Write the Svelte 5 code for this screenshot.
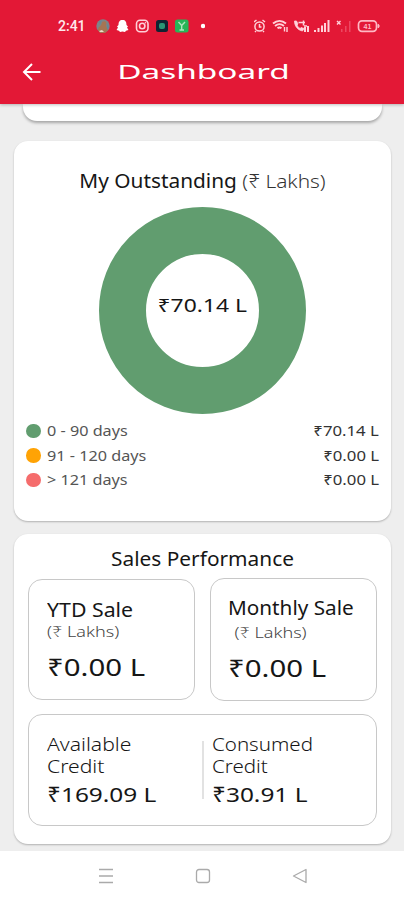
<script>
  const outstanding = [
    { label: '0 - 90 days', value: '₹70.14 L', tone: 'green' },
    { label: '91 - 120 days', value: '₹0.00 L', tone: 'orange' },
    { label: '> 121 days', value: '₹0.00 L', tone: 'coral' }
  ];

  const credits = [
    { label: 'Available', value: '₹169.09 L', kind: 'available' },
    { label: 'Consumed', value: '₹30.91 L', kind: 'consumed' }
  ];
</script>

<div class="screen">
  <header class="header">
    <div class="status-bar">
      <span class="clock">2:41</span>
      <svg class="notifications" width="110" height="16" viewBox="0 0 110 16" aria-hidden="true">
        <circle cx="8" cy="8" r="6.7" fill="#7d8588" />
        <path d="M3 12c0-4 3-2 4-8 4-2 5 1 4 4l2 4-3 3H5z" fill="#a67553" />
        <path d="M4 3l3-1-2 5zM12 5l2 4-2 3z" fill="#648898" />
        <path d="M4 13l3-1 2 2H5z" fill="#e8ddc8" />
        <path d="M27.500 2c-3 0-4 2-4 5l-1.500 1.500 1 1-1.500 2.500 2.500.8 1 1.200 2.500-.5 2.500.5 1-1.200 2.500-.8-1.500-2.500 1-1L31.500 7c0-3-1-5-4-5z" fill="#fff" />
        <g fill="none" stroke="#ffcfd7" stroke-width="1.600">
          <rect x="41.500" y="2.200" width="11.500" height="11.500" rx="3.500" />
          <circle cx="47.200" cy="8" r="2.700" />
        </g>
        <circle cx="50.500" cy="4.700" r=".8" fill="#ffcfd7" />
        <rect x="61" y="2" width="12" height="12" rx="2.500" fill="#102332" />
        <rect x="64" y="5" width="6" height="6" rx="2" fill="#2b9474" />
        <rect x="80" y="1.500" width="13.500" height="13" rx="2.500" fill="#27b558" />
        <path d="M83.500 4l3.200 3.500L90 4M86.700 7.500V12M84.500 12H89" fill="none" stroke="#afe6bf" stroke-width="1.400" />
        <circle cx="108" cy="8" r="2.200" fill="#fff" />
      </svg>
      <svg class="system" width="128" height="16" viewBox="0 0 128 16" aria-hidden="true">
        <g fill="none" stroke="#ffd2da" stroke-width="1.500">
          <circle cx="5.500" cy="8.500" r="4.600" />
          <path d="M0 4l2.500-2M11 4L8.500 2M5.500 6v3h2M2 13l-1 1M9 13l1 1" />
          <path d="M19 5.500c4-3.500 9-3.500 13 0M21 8c3-2.500 6-2.500 9 0M23.500 10.300c1.500-1.200 2.500-1.200 4 0" stroke-width="1.900" />
          <path d="M30.500 13.500V9M33 9v5" stroke-width="1.400" />
          <path d="M40.500 3c0 5 3 9 8 10l1.500-2.500-3-1-1 1c-1.500-1-2.300-2-3-3.500l1-1L42.500 3z" fill="#ffd2da" stroke-width=".8" />
          <path d="M44.500 4.500h6.500M49.500 2.500v5M50 8h3" />
        </g>
        <path d="M50 9h2v5h-2zM53 8h2v6h-2zM60 12h2v2h-2zM63.500 10h2v4h-2zM67 7.500h2V14h-2zM70 5h2v9h-2zM73.500 2h2v12h-2z" fill="#ffd2da" />
        <path d="M87 11h1.500v3H87zM91 8h1.500v6H91zM95 3h1.500v11H95z" fill="#ed4862" />
        <path d="M83 3l3.500 3.500M86.500 3L83 6.500" fill="none" stroke="#ffd2da" stroke-width="1.400" />
        <rect x="104.500" y="2.800" width="18" height="10.500" rx="3.500" fill="none" stroke="#ffb8c4" stroke-width="1.700" />
        <path d="M124 6.300c1.500 0 1.500 3.500 0 3.500z" fill="#ffb8c4" stroke="#ffb8c4" />
        <text class="battery" x="113.500" y="10.700" text-anchor="middle">41</text>
      </svg>
    </div>
    <div class="app-bar">
      <button class="back" aria-label="Back">
        <svg width="20" height="20" viewBox="0 0 20 20">
          <path d="M18.500 10H2M10 2l-8 8 8 8" fill="none" stroke="#fff" stroke-width="2" />
        </svg>
      </button>
      <h1><span>Dashboard</span></h1>
    </div>
  </header>

  <main>
    <div class="previous-card"></div>

    <section class="card outstanding">
      <h2>My Outstanding <span class="unit">(₹ Lakhs)</span></h2>
      <div class="donut"><span>₹70.14 L</span></div>
      <ul class="legend">
        {#each outstanding as row}
          <li>
            <i class="dot {row.tone}"></i>
            <span class="range">{row.label}</span>
            <span class="amount">{row.value}</span>
          </li>
        {/each}
      </ul>
    </section>

    <section class="card sales">
      <h2>Sales Performance</h2>
      <div class="sales-grid">
        <div class="box ytd">
          <h3>YTD Sale</h3>
          <p class="lakhs">(₹ Lakhs)</p>
          <p class="total">₹0.00 L</p>
        </div>
        <div class="box monthly">
          <h3>Monthly Sale</h3>
          <p class="lakhs">(₹ Lakhs)</p>
          <p class="total">₹0.00 L</p>
        </div>
      </div>
      <div class="box credit">
        {#each credits as credit}
          <div class="credit-item {credit.kind}">
            <p class="credit-label">{credit.label}<br />Credit</p>
            <p class="credit-value">{credit.value}</p>
          </div>
        {/each}
      </div>
    </section>
  </main>

  <nav aria-label="System navigation">
    <svg width="16" height="16" viewBox="0 0 16 16"><path d="M1 1.500h14M1 8h14M1 14.500h14" /></svg>
    <svg width="16" height="16" viewBox="0 0 16 16"><rect x="1.500" y="1.500" width="13" height="13" rx="2.500" /></svg>
    <svg width="16" height="16" viewBox="0 0 16 16"><path d="M14 1.500v13L1.500 8z" stroke-linejoin="round" /></svg>
  </nav>
</div>

<style>
  :global(body) {
    background: #fff;
  }

  .screen {
    width: 404px;
    height: 900px;
    display: flex;
    flex-direction: column;
    overflow: hidden;
    background: #eee;
    color: #161616;
    font-family: "Noto Sans", "Open Sans", sans-serif;
  }

  h1, h2, h3, p, ul {
    margin: 0;
    padding: 0;
    font-weight: 400;
    white-space: nowrap;
  }

  .header {
    height: 104px;
    flex: none;
    background: #e31836;
    color: #fff;
    box-shadow: 0 1px 3px rgba(0, 0, 0, 0.25);
    z-index: 1;
  }

  .status-bar {
    height: 34px;
    padding: 18px 22px 0 58px;
    box-sizing: border-box;
    display: flex;
    align-items: center;
  }

  .clock {
    width: 37px;
    font: 500 14px/16px Roboto, sans-serif;
    color: #ffe8ec;
  }

  .notifications {
    flex: none;
  }

  .system {
    flex: none;
    margin-left: auto;
  }

  .battery {
    font: 700 7px "Liberation Sans", sans-serif;
    fill: #ffb8c4;
  }

  .app-bar {
    display: grid;
    grid-template-columns: 60px 1fr 58px;
    align-items: center;
    height: 76px;
  }

  .back {
    display: flex;
    padding: 0 0 0 22px;
    border: 0;
    background: none;
  }

  h1 {
    text-align: center;
    font-size: 19.5px;
    line-height: 28px;
  }

  h1 span {
    display: inline-block;
    transform: scaleX(1.71);
  }

  main {
    flex: 1;
    min-height: 0;
  }

  .previous-card {
    height: 17px;
    margin: 0 22px 20px 23px;
    border-radius: 0 0 14px 14px;
    background: #fff;
    box-shadow: 0 2px 3px rgba(0, 0, 0, 0.3);
  }

  .card {
    margin: 0 13px 13px 14px;
    box-sizing: border-box;
    border-radius: 14px;
    background: #fff;
    box-shadow: 0 1px 2px rgba(0, 0, 0, 0.26);
  }

  h2 {
    text-align: center;
    font-size: 19px;
    line-height: 26px;
    transform: scaleX(1.097);
  }

  .outstanding {
    height: 380px;
    padding: 27px 12px 0;
  }

  .unit {
    font-weight: 300;
    color: #333;
  }

  .donut {
    width: 207px;
    height: 207px;
    margin: 13px auto 5px;
    box-sizing: border-box;
    border: 47px solid #619d6f;
    border-radius: 50%;
    display: flex;
    justify-content: center;
    font-size: 18px;
    line-height: 24px;
    padding-top: 39px;
  }

  .donut span {
    height: 24px;
    white-space: nowrap;
    transform: scaleX(1.27);
  }

  .legend {
    list-style: none;
    font-size: 13.5px;
    line-height: 24.7px;
  }

  .legend li {
    display: flex;
    align-items: center;
    height: 24.7px;
  }

  .dot {
    width: 14.5px;
    height: 14.5px;
    margin: -1px 6.5px 0 0;
    border-radius: 50%;
  }

  .green {
    background: #619d6f;
  }

  .orange {
    background: #ffa305;
  }

  .coral {
    background: #f56c6c;
  }

  .range {
    color: #555;
    transform-origin: left;
    transform: scaleX(1.2);
  }

  .amount {
    margin-left: auto;
    color: #333;
    transform-origin: right;
    transform: scaleX(1.24);
  }

  .sales {
    height: 310px;
    padding: 12px 14px 0;
  }

  .sales-grid {
    display: grid;
    grid-template-columns: 1fr 1fr;
    gap: 15px;
    align-items: center;
    margin: 6px 0 13px;
  }

  .box {
    box-sizing: border-box;
    border: 1px solid #c8c8c8;
    border-radius: 14px;
  }

  .ytd {
    height: 121px;
    padding: 17px 0 0 18px;
  }

  .monthly {
    height: 123px;
    padding: 16px 0 0 17px;
  }

  h3 {
    font-size: 19px;
    line-height: 26px;
    transform-origin: left;
    transform: scaleX(1.12);
  }

  .monthly h3 {
    transform: scaleX(1.09);
  }

  .lakhs {
    font-size: 14px;
    font-weight: 300;
    line-height: 18px;
    color: #444;
    transform-origin: left;
    transform: scaleX(1.29);
  }

  .total {
    margin-top: 9px;
    font-size: 23.5px;
    line-height: 34px;
    transform-origin: left;
    transform: scaleX(1.25);
  }

  .monthly .lakhs {
    padding-left: 5px;
    margin-top: 3px;
  }

  .credit {
    height: 112px;
    display: flex;
    padding: 18px 0 0 18px;
  }

  .credit-item {
    width: 155px;
    box-sizing: border-box;
  }

  .consumed {
    height: 58px;
    margin-top: 8px;
    padding-left: 8px;
    border-left: 2px solid #e2e2e2;
  }

  .consumed .credit-label {
    margin-top: -8px;
    transform: scaleX(1.08);
  }

  .credit-label {
    font-size: 19px;
    font-weight: 300;
    line-height: 22px;
    transform-origin: left;
    transform: scaleX(1.11);
  }

  .credit-value {
    margin-top: 4px;
    font-size: 20px;
    line-height: 28px;
    transform-origin: left;
    transform: scaleX(1.22);
  }

  nav {
    height: 49px;
    flex: none;
    display: flex;
    justify-content: center;
    align-items: center;
    gap: 81px;
    padding-left: 1px;
    background: #fff;
  }

  nav svg {
    fill: none;
    stroke: #aaa;
    stroke-width: 1.3;
  }
</style>
